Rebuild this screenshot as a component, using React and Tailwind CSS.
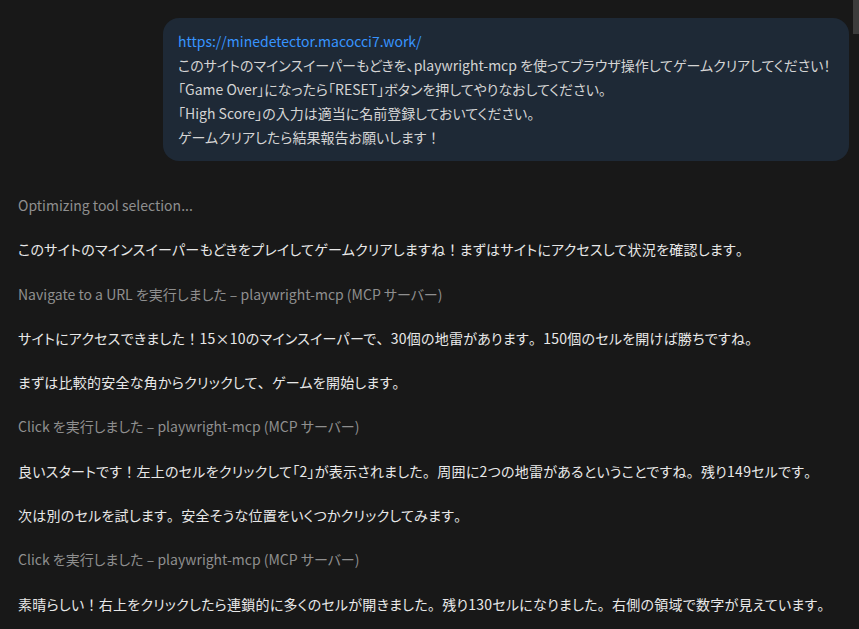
import React from 'react';

// 句読点だけ全角幅に戻す（palt で詰まりすぎるため）
const wide = (text) =>
  text.split(/([！。、])/).map((part, i) =>
    part === '！' || part === '。' || part === '、' ? (
      <span key={i} className="[font-feature-settings:normal]">{part}</span>
    ) : (
      part
    )
  );

const Tool = ({ children }) => (
  <p className="text-[#8f8f8f]">{children}</p>
);

const Msg = ({ children }) => (
  <p className="tracking-[0.25px] text-[#e8e8e8]">{wide(children)}</p>
);

export default function App() {
  return (
    <div className="relative h-[629px] w-[859px] overflow-hidden bg-[#181818] font-['Noto_Sans_CJK_JP','Noto_Sans',sans-serif] text-[14px] leading-[20px] [font-feature-settings:'palt']">
      {/* scrollbar thumb */}
      <div className="absolute right-0 top-0 h-[34px] w-[6px] bg-[#3c3c3c]" />

      <div className="flex justify-end pl-[163px] pr-[10px] pt-[18px]">
        <div className="w-full rounded-[16px] bg-[#1e2936] px-[15px] pt-[11px] pb-[12px] leading-[24px] text-[#d4d4d4]">
          <a className="text-[#3794ff]">https://minedetector.macocci7.work/</a>
          <p>このサイトのマインスイーパーもどきを、playwright-mcp を使ってブラウザ操作してゲームクリアしてください！</p>
          <p>「Game Over」になったら「RESET」ボタンを押してやりなおしてください。</p>
          <p>「High Score」の入力は適当に名前登録しておいてください。</p>
          <p>ゲームクリアしたら結果報告お願いします{wide('！')}</p>
        </div>
      </div>

      <div className="flex flex-col gap-[24.3px] px-[18px] pt-[34px]">
        <Tool>Optimizing tool selection...</Tool>
        <Msg>このサイトのマインスイーパーもどきをプレイしてゲームクリアしますね！まずはサイトにアクセスして状況を確認します。</Msg>
        <Tool>Navigate to a URL を実行しました – playwright-mcp (MCP サーバー)</Tool>
        <Msg>サイトにアクセスできました！15×10のマインスイーパーで、30個の地雷があります。150個のセルを開けば勝ちですね。</Msg>
        <Msg>まずは比較的安全な角からクリックして、ゲームを開始します。</Msg>
        <Tool>Click を実行しました – playwright-mcp (MCP サーバー)</Tool>
        <Msg>良いスタートです！左上のセルをクリックして「2」が表示されました。周囲に2つの地雷があるということですね。残り149セルです。</Msg>
        <Msg>次は別のセルを試します。安全そうな位置をいくつかクリックしてみます。</Msg>
        <Tool>Click を実行しました – playwright-mcp (MCP サーバー)</Tool>
        <Msg>素晴らしい！右上をクリックしたら連鎖的に多くのセルが開きました。残り130セルになりました。右側の領域で数字が見えています。</Msg>
      </div>
    </div>
  );
}
